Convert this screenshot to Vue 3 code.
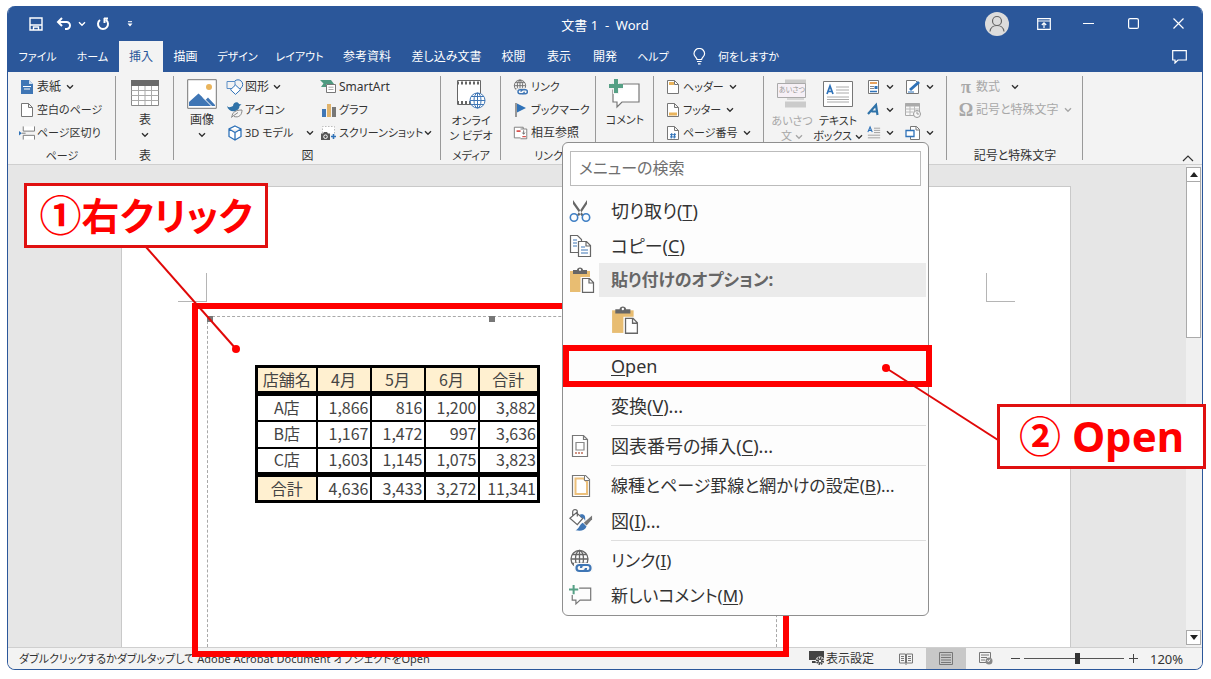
<script setup>
import { ref } from 'vue'

const zoom = ref(54)
const query = ref('')

const tabs = [
  'ファイル', 'ホーム', '挿入', '描画', 'デザイン', 'レイアウト',
  '参考資料', '差し込み文書', '校閲', '表示', '開発', 'ヘルプ',
]
const isKatakana = (text) => /^[ァ-ヶー]+$/.test(text)

const sales = [
  { name: 'A店', values: ['1,866', '816', '1,200', '3,882'] },
  { name: 'B店', values: ['1,167', '1,472', '997', '3,636'] },
  { name: 'C店', values: ['1,603', '1,145', '1,075', '3,823'] },
]
const totals = ['4,636', '3,433', '3,272', '11,341']

const menuTop = [
  { icon: 'cut', label: '切り取り', key: 'T' },
  { icon: 'copy', label: 'コピー', key: 'C' },
]
const menuRest = [
  { label: '変換', key: 'V', more: true, line: true },
  { icon: 'caption', label: '図表番号の挿入', key: 'C', more: true, line: true },
  { icon: 'borders', label: '線種とページ罫線と網かけの設定', key: 'B', more: true, long: true },
  { icon: 'bucket', label: '図', key: 'I', more: true, line: true },
  { icon: 'link', label: 'リンク', key: 'I', long: true },
  { icon: 'newcomment', label: '新しいコメント', key: 'M', long: true },
]
</script>

<template>
  <div class="stage">
    <svg class="sprite" width="0" height="0" aria-hidden="true">
      <symbol id="chev" viewBox="0 0 8 6"><path d="M1 1.200 4 4.200 7 1.200" fill="none" stroke="currentColor" stroke-width="1.400" /></symbol>
      <symbol id="cover" viewBox="0 0 16 16"><path d="M2 1h8l4 4v10H2z" fill="#3f76b5" /><path d="M10 1v4h4z" fill="#cfe0f2" /><path d="M4 7.500h8M5 10h6" stroke="#fff" stroke-width="1.200" /></symbol>
      <symbol id="blank" viewBox="0 0 16 16"><path d="M2.500 1.500h7l4 4v9h-11zM9.500 1.500v4h4" fill="#fff" stroke="#777" /></symbol>
      <symbol id="break" viewBox="0 0 17 16"><path d="M4.500 1v5h12V1M4.500 15V10.500h12V15" fill="#fff" stroke="#777" /><path d="M3 8.200h4" stroke="#777" /><path d="M0 6l3 2.300L0 10.600z" fill="#2f72b8" /></symbol>
      <symbol id="table" viewBox="0 0 28 26"><path d="M.5.5h27v25H.5z" fill="#fff" stroke="#888" /><path d="M0 0h28v6H0z" fill="#6a6a6a" /><path d="M.5 10.500h27M.5 15.500h27M.5 20.500h27M7.500 6v19M14 6v19M20.500 6v19" stroke="#aaa" /></symbol>
      <symbol id="picture" viewBox="0 0 30 30"><path d="M.7.7h28.600v28.600H.7z" fill="#fff" stroke="#777" /><path d="M2 27v-4l9.500-8.500 7 6.500 2.500-2.500 7 7.500v1z" fill="#3f76b5" /><path d="M16 18.500l9 9" stroke="#fff" /><circle cx="22" cy="8" r="3" fill="#e9b45c" /></symbol>
      <symbol id="shapes" viewBox="0 0 18 16"><circle cx="12" cy="5.500" r="4.700" fill="#f3f3f3" stroke="#2f72b8" /><path d="M1 2.500h8v7H1z" fill="#f3f3f3" stroke="#5b8ec6" /><path d="M9.500 6l5 4.700-5 4.700-5-4.700z" fill="#fff" stroke="#2f72b8" /></symbol>
      <symbol id="icons" viewBox="0 0 16 16"><path d="M0 4c2 2 4 1 6 0 0-4 5-5 6-2l2.500.5-2 1.500c0 3-2 4-4 5C4 10 1 8 0 4z" fill="#2f72a8" /><path d="M5 15c0-5 4-7 10-7 0 5-3 8-8 6.500M4 15.500l7-5" fill="#f3f3f3" stroke="#888" /></symbol>
      <symbol id="cube" viewBox="0 0 16 16"><path d="M8 1l6 3v7.500l-6 3.500-6-3.500V4zM2 4l6 3.500L14 4M8 7.500V15" fill="#fff" stroke="#2f72b8" stroke-width="1.300" /></symbol>
      <symbol id="smartart" viewBox="0 0 18 16"><path d="M0 1h11l3 4H6v3H1l2.500-3.500z" fill="#4f9a80" /><path d="M6.500 5.500h9v8h-9z" fill="#fff" stroke="#777" /><path d="M8.500 8.200h5M8.500 10.500h5" stroke="#aaa" /></symbol>
      <symbol id="chart" viewBox="0 0 16 16"><path d="M1 7h4v8H1z" fill="#3f76b5" /><path d="M6 2h4v13H6z" fill="#e0b36c" /><path d="M11 5h4v10h-4z" fill="#777" /></symbol>
      <symbol id="shot" viewBox="0 0 18 16"><path d="M2.500 8V1.500h12V9" fill="#fff" stroke="#bbb" stroke-dasharray="1.500 1.500" /><path d="M1 8.500h2l1-1.500h3l1 1.500h2V15H1z" fill="#555" /><circle cx="5.500" cy="11.700" r="1.800" fill="#555" stroke="#fff" /><path d="M13.500 9v5M11 11.500h5" stroke="#2f72b8" stroke-width="1.600" /></symbol>
      <symbol id="video" viewBox="0 0 30 30"><path d="M1.500 1.500h23v24h-23z" fill="#fff" stroke="#666" /><path d="M1 4h24M1 23.500h24" stroke="#666" stroke-width="3" stroke-dasharray="2 2" /><circle cx="21.500" cy="21.500" r="7.500" fill="#fff" stroke="#3f76b5" /><ellipse cx="21.500" cy="21.500" rx="3.500" ry="7.500" fill="none" stroke="#3f76b5" /><path d="M14 21.500h15M15 17.500h13M15 25.500h13M21.500 14v15" stroke="#3f76b5" /></symbol>
      <symbol id="link" viewBox="0 0 24 24"><g fill="none" stroke="#666" stroke-width="1.300"><circle cx="10.500" cy="10" r="8.500" /><ellipse cx="10.500" cy="10" rx="4" ry="8.500" /><path d="M2 10h17M3.500 5.500h14M3.500 14.500h14M10.500 1.500v17" /></g><path d="M5 14h19v9H5z" fill="#f9f9f9" /><g fill="none" stroke="#3f76b5" stroke-width="2.200"><path d="M14.500 16h-4a3 3 0 0 0 0 6h4a3 3 0 0 0 2.500-3" /><path d="M14.500 22h4a3 3 0 0 0 0-6h-4a3 3 0 0 0-2.500 3" /></g></symbol>
      <symbol id="flag" viewBox="0 0 16 16"><path d="M3 1v14" stroke="#666" stroke-width="1.300" /><path d="M4 1.500l9 4.500-9 4.500z" fill="#2f72b8" /></symbol>
      <symbol id="xref" viewBox="0 0 18 16"><path d="M1.500 1.500h10v12h-10z" fill="#fff" stroke="#777" /><path d="M4 6h5" stroke="#d9534f" stroke-width="2" /><path d="M8.500 3.500h7v11h-7" fill="#fff" stroke="#777" /><path d="M10.500 12h4" stroke="#d9534f" stroke-width="1.500" /><path d="M12 5v4M10.500 7.500l1.500 2 1.500-2" fill="none" stroke="#666" /></symbol>
      <symbol id="comment" viewBox="0 0 32 30"><path d="M4 5h26v18H13l-5 5v-5H4z" fill="#fff" stroke="#777" stroke-width="1.200" /><path d="M7 0v15M0 7.500h14" stroke="#f3f3f3" stroke-width="6" /><path d="M7 0v14M0 7h14" stroke="#56a085" stroke-width="4" /></symbol>
      <symbol id="header" viewBox="0 0 16 16"><path d="M2.500 1.500h7l4 4v9h-11z" fill="#fff" stroke="#777" /><path d="M4 3h5v3H4z" fill="#e9b45c" /><path d="M9.500 1.500v4h4" fill="none" stroke="#777" /></symbol>
      <symbol id="footer" viewBox="0 0 16 16"><path d="M2.500 1.500h7l4 4v9h-11zM9.500 1.500v4h4" fill="#fff" stroke="#777" /><path d="M4 10.500h8v3H4z" fill="#e9b45c" /></symbol>
      <symbol id="pageno" viewBox="0 0 16 16"><path d="M2.500 1.500h7l4 4v9h-11zM9.500 1.500v4h4" fill="#fff" stroke="#777" /><path d="M6.800 8l-.6 5.500M9.800 8l-.6 5.500M5 9.700h6M5 11.900h6" stroke="#2f72b8" /></symbol>
      <symbol id="greet" viewBox="0 0 30 30"><path d="M8 .5h21v7H8zM8 22.500h21v6H8z" fill="#cbcbcb" /><path d="M.5 4.500h28v14H.5z" fill="#f6f0f6" stroke="#aaa" /><path d="M10 20h17" stroke="#bbb" /></symbol>
      <symbol id="textbox" viewBox="0 0 30 26"><path d="M.5.5h29v25H.5z" fill="#fff" stroke="#777" /><path d="M4 13L7 5l3 8M5 10.500h4" fill="none" stroke="#2f72b8" stroke-width="1.700" /><path d="M13 6h13M13 9h13M13 12h13M4 16h22M4 18.500h22M4 21h22" stroke="#aaa" /></symbol>
      <symbol id="parts" viewBox="0 0 14 16"><path d="M1.500 1.500h10v13h-10z" fill="#fff" stroke="#777" /><path d="M3 4h7" stroke="#e9a35c" stroke-width="2" /><path d="M3 7.500h4M3 9.500h4" stroke="#888" /><path d="M7.500 8.500h3" stroke="#2f72b8" stroke-width="3" /><path d="M3 12.500h7" stroke="#2f72b8" stroke-width="1.500" /></symbol>
      <symbol id="wordart" viewBox="0 0 14 16"><path d="M1 12L9 3l1.500 10M4.500 9.500h6" fill="none" stroke="#2f72a8" stroke-width="2.200" /></symbol>
      <symbol id="dropcap" viewBox="0 0 16 16"><path d="M1 7l2.500-6L6 7M2 5h3" fill="none" stroke="#2f72b8" stroke-width="1.300" /><path d="M8 2.500h7M8 5h7M8 7.500h7M1 10.500h14M1 13.500h14" stroke="#999" /></symbol>
      <symbol id="sign" viewBox="0 0 16 16"><path d="M1.500 1.500h9l3 3v10h-12z" fill="#fff" stroke="#777" /><path d="M5 11l9-8" stroke="#2f72b8" stroke-width="3" /><path d="M3 13h6" stroke="#2f72b8" /></symbol>
      <symbol id="date" viewBox="0 0 16 16"><path d="M.5 1.500h14v12H.5z" fill="#f7f7f7" stroke="#aaa" /><path d="M0 3h15" stroke="#aaa" stroke-width="3" /><path d="M.5 7h14M.5 10h8M5 4v9M9.500 4v5" stroke="#bbb" /><circle cx="12" cy="12" r="3.500" fill="#f7f7f7" stroke="#999" /><path d="M12 9.500V12h2" fill="none" stroke="#999" /></symbol>
      <symbol id="object" viewBox="0 0 16 16"><path d="M5.500 1.500h6l3 3v10h-9z" fill="#fff" stroke="#777" /><path d="M11 1.500v3.500h3.500" fill="none" stroke="#777" /><path d="M1 5.500h8v6H1z" fill="#fff" stroke="#2f72b8" stroke-width="1.300" /></symbol>
      <symbol id="cut" viewBox="0 0 24 24"><path d="M4 1l10.500 15-2 1L4 5zM18 1L8 16l2 1 8-12z" fill="#666" /><g fill="none" stroke="#3f7fc4" stroke-width="1.600"><circle cx="5" cy="18.500" r="3.700" /><circle cx="17" cy="18.500" r="3.700" /></g></symbol>
      <symbol id="copy" viewBox="0 0 24 24"><path d="M1.500 1.500h7l4 4v13h-11z" fill="#fff" stroke="#666" stroke-width="1.200" /><path d="M4 6h4M4 9h4M4 12h4" stroke="#3f76b5" stroke-width="1.200" /><path d="M9.500 7.500h8l4 4v11h-12zM17 7.500v4.500h4.500" fill="#fff" stroke="#666" stroke-width="1.200" /><path d="M12 13h4M12 16h7M12 19h7" stroke="#3f76b5" stroke-width="1.200" /></symbol>
      <symbol id="paste" viewBox="0 0 26 26"><path d="M1 4h20v21H1z" fill="#e8bd72" /><path d="M4 3h4c0-3.500 6-3.500 6 0h4v4H4z" fill="#666" /><circle cx="11" cy="2.800" r="1.100" fill="#fff" /><path d="M11.500 10h13v16h-13z" fill="#fdfdfd" /><path d="M13.500 11.500h7l4 4v9.800h-11zM20 11.500V16h4.500" fill="#fff" stroke="#666" stroke-width="1.200" /></symbol>
      <symbol id="caption" viewBox="0 0 24 24"><path d="M3.500 1.500h11l4 4v17h-15zM14.500 1.500v4h4" fill="#fff" stroke="#777" stroke-width="1.200" /><path d="M7 8.500h8v7.500H7z" fill="#fff" stroke="#888" stroke-width="1.200" /><path d="M6 19h9" stroke="#c0705c" stroke-width="1.500" stroke-dasharray="2 1" /></symbol>
      <symbol id="borders" viewBox="0 0 24 24"><path d="M3.500 1.500h13l4 4v17h-17z" fill="#fff" stroke="#777" stroke-width="1.200" /><path d="M6.500 4.500h8l3.500 3.500v12H6.500z" fill="none" stroke="#ecc07c" stroke-width="2" /><path d="M15.500 1.500v5h5" fill="#fff" stroke="#777" /></symbol>
      <symbol id="bucket" viewBox="0 0 26 26"><path d="M1 10l7-6 7 6-6 7zM4 8V3c0-3 5-3 5 0v5" fill="#fff" stroke="#666" stroke-width="1.300" /><path d="M12 6c5-1 6 2 5.500 7-1-3-3-4-5-4z" fill="#3f76b5" /><path d="M25 7v4l-6 7-3-3z" fill="#777" /><path d="M15 15l4 4c-2 5-7 5-12 4 4-1 4-6 8-8z" fill="#3f76b5" /></symbol>
      <symbol id="newcomment" viewBox="0 0 26 24"><path d="M11 3.500h12.500v13H12l-4.500 4v-4H3.500V11" fill="none" stroke="#777" stroke-width="1.300" /><path d="M5 0v10M0 5h10" stroke="#56a085" stroke-width="2.200" /></symbol>
    </svg>

    <div class="window">
      <header class="titlebar">
        <div class="quick">
          <button aria-label="上書き保存"><svg width="14" height="14" viewBox="0 0 14 14"><path d="M1 1h12v12H1z" fill="none" stroke="#fff" stroke-width="1.400" /><path d="M1 8h12M4.500 13v-3h5v3" fill="none" stroke="#fff" stroke-width="1.400" /></svg></button>
          <button aria-label="元に戻す"><svg width="16" height="14" viewBox="0 0 16 14"><path d="M6 1L2 5l4 4M2 5h8.500a3.500 3.500 0 0 1 0 7H9" fill="none" stroke="#fff" stroke-width="2" /></svg></button>
          <button class="narrow" aria-label="元に戻す履歴"><svg width="8" height="6"><use href="#chev" /></svg></button>
          <button class="redo" aria-label="繰り返し"><svg width="14" height="14" viewBox="0 0 14 14"><path d="M4 3a5 5 0 1 0 6 0M8 1.500h4M8.500 1v5" fill="none" stroke="#fff" stroke-width="2" /></svg></button>
          <button class="narrow custom" aria-label="カスタマイズ"><svg width="6" height="6" viewBox="0 0 6 6"><path d="M1 .7h4" stroke="#fff" /><path d="M.5 2.500h5L3 5.500z" fill="#fff" /></svg></button>
        </div>
        <h1>文書 1&nbsp; -&nbsp; Word</h1>
        <div class="controls">
          <button class="user" aria-label="アカウント"><svg width="24" height="24" viewBox="0 0 24 24"><circle cx="12" cy="12" r="12" fill="#dcdcdc" /><circle cx="12" cy="9" r="4.500" fill="none" stroke="#666" stroke-width="1.200" /><path d="M5 19.500c1-8 13-8 14 0" fill="none" stroke="#666" stroke-width="1.200" /></svg></button>
          <button aria-label="リボンの表示オプション"><svg width="14" height="12" viewBox="0 0 14 12"><path d="M.7.7h12.600v10.600H.7zM.7 3h12.600M7 10V4.800M4.800 7L7 4.800 9.200 7" fill="none" stroke="#fff" stroke-width="1.200" /></svg></button>
          <button aria-label="最小化"><svg width="11" height="11" viewBox="0 0 11 11"><path d="M0 5.500h11" stroke="#fff" /></svg></button>
          <button aria-label="最大化"><svg width="11" height="11" viewBox="0 0 11 11"><rect x=".6" y=".6" width="9.800" height="9.800" rx="1.500" fill="none" stroke="#fff" stroke-width="1.200" /></svg></button>
          <button aria-label="閉じる"><svg width="11" height="11" viewBox="0 0 11 11"><path d="M.5.5l10 10M10.500.5l-10 10" stroke="#fff" stroke-width="1.200" /></svg></button>
        </div>
      </header>

      <nav class="tabs">
        <div class="tablist">
          <button v-for="t in tabs" :key="t" :class="{ active: t === '挿入', k: isKatakana(t) }">{{ t }}</button>
        </div>
        <button class="tell k"><svg width="13" height="17" viewBox="0 0 13 17"><path d="M4 11.500C4 9.500 1 8.500 1 5.700a5.300 5.300 0 0 1 10.600 0c0 2.800-3 3.800-3 5.800zM4 13.500h4.600M5 15.800h2.600" fill="none" stroke="#fff" stroke-width="1.200" /></svg>何をしますか</button>
        <button class="share" aria-label="コメント"><svg width="15" height="14" viewBox="0 0 15 14"><path d="M.7.7h13.600v9.300H6l-3 3v-3H.7z" fill="none" stroke="#fff" stroke-width="1.200" /></svg></button>
      </nav>

      <section class="ribbon">
        <div class="group g-page">
          <div class="rows">
            <button><svg width="16" height="16"><use href="#cover" /></svg>表紙<svg class="c" width="8" height="6"><use href="#chev" /></svg></button>
            <button class="k"><svg width="16" height="16"><use href="#blank" /></svg>空白のページ</button>
            <button class="k"><svg width="16" height="16"><use href="#break" /></svg>ページ区切り</button>
          </div>
          <p class="k">ページ</p>
        </div>
        <div class="group g-table">
          <button class="big"><svg width="28" height="26"><use href="#table" /></svg><span>表</span><svg width="8" height="6"><use href="#chev" /></svg></button>
          <p>表</p>
        </div>
        <div class="group g-fig">
          <div class="cols">
            <button class="big"><svg width="30" height="30"><use href="#picture" /></svg><span>画像</span><svg width="8" height="6"><use href="#chev" /></svg></button>
            <div class="rows">
              <button><svg width="18" height="16"><use href="#shapes" /></svg>図形<svg class="c" width="8" height="6"><use href="#chev" /></svg></button>
              <button class="k"><svg width="18" height="16"><use href="#icons" /></svg>アイコン</button>
              <button class="k"><svg width="18" height="16"><use href="#cube" /></svg>3D モデル<svg class="c far" width="8" height="6"><use href="#chev" /></svg></button>
            </div>
            <div class="rows second">
              <button><svg width="18" height="16"><use href="#smartart" /></svg>SmartArt</button>
              <button class="k"><svg width="18" height="16"><use href="#chart" /></svg>グラフ</button>
              <button class="k"><svg width="18" height="16"><use href="#shot" /></svg>スクリーンショット<svg width="8" height="6"><use href="#chev" /></svg></button>
            </div>
          </div>
          <p>図</p>
        </div>
        <div class="group g-media">
          <button class="big two"><svg width="30" height="30"><use href="#video" /></svg><span>オンライ<br>ン ビデオ</span></button>
          <p class="k">メディア</p>
        </div>
        <div class="group g-link">
          <div class="rows">
            <button class="k"><svg width="16" height="16"><use href="#link" /></svg>リンク</button>
            <button class="k"><svg width="16" height="16"><use href="#flag" /></svg>ブックマーク</button>
            <button><svg width="16" height="16"><use href="#xref" /></svg>相互参照</button>
          </div>
          <p class="k">リンク</p>
        </div>
        <div class="group g-comment">
          <button class="big k"><svg width="32" height="30"><use href="#comment" /></svg><span>コメント</span></button>
        </div>
        <div class="group g-header">
          <div class="rows">
            <button class="k"><svg width="16" height="16"><use href="#header" /></svg>ヘッダー<svg class="c" width="8" height="6"><use href="#chev" /></svg></button>
            <button class="k"><svg width="16" height="16"><use href="#footer" /></svg>フッター<svg class="c" width="8" height="6"><use href="#chev" /></svg></button>
            <button class="k"><svg width="16" height="16"><use href="#pageno" /></svg>ページ番号<svg class="c" width="8" height="6"><use href="#chev" /></svg></button>
          </div>
        </div>
        <div class="group g-text">
          <div class="cols">
            <button class="big two off"><i class="greet"><svg width="30" height="30"><use href="#greet" /></svg><b>あいさつ</b></i><span>あいさつ<br>文 <svg width="8" height="6"><use href="#chev" /></svg></span></button>
            <button class="big two"><svg width="30" height="26"><use href="#textbox" /></svg><span>テキスト<br>ボックス <svg width="8" height="6"><use href="#chev" /></svg></span></button>
            <div class="rows mini">
              <button aria-label="クイック パーツ"><svg width="14" height="16"><use href="#parts" /></svg><svg class="c" width="8" height="6"><use href="#chev" /></svg></button>
              <button aria-label="ワードアート"><svg width="14" height="16"><use href="#wordart" /></svg><svg class="c" width="8" height="6"><use href="#chev" /></svg></button>
              <button aria-label="ドロップ キャップ"><svg width="14" height="16"><use href="#dropcap" /></svg><svg class="c" width="8" height="6"><use href="#chev" /></svg></button>
            </div>
            <div class="rows mini">
              <button aria-label="署名欄"><svg width="16" height="16"><use href="#sign" /></svg><svg class="c" width="8" height="6"><use href="#chev" /></svg></button>
              <button aria-label="日付と時刻"><svg width="16" height="16"><use href="#date" /></svg></button>
              <button aria-label="オブジェクト"><svg width="16" height="16"><use href="#object" /></svg><svg class="c" width="8" height="6"><use href="#chev" /></svg></button>
            </div>
          </div>
        </div>
        <div class="group g-sym">
          <div class="rows">
            <button class="off"><em>π</em>数式<svg class="c dark" width="8" height="6"><use href="#chev" /></svg></button>
            <button class="off"><em>Ω</em>記号と特殊文字<svg class="c" width="8" height="6"><use href="#chev" /></svg></button>
          </div>
          <p>記号と特殊文字</p>
        </div>
        <button class="fold" aria-label="リボンを折りたたむ"><svg width="12" height="7" viewBox="0 0 12 7"><path d="M1 6l5-5 5 5" fill="none" stroke="#333" stroke-width="1.200" /></svg></button>
      </section>

      <main class="canvas">
        <div class="paper">
          <div class="corner left"></div>
          <div class="corner right"></div>
          <div class="embed">
            <span class="handle h1"></span><span class="handle h2"></span>
            <table>
              <thead><tr><th>店舗名</th><th>4月</th><th>5月</th><th>6月</th><th>合計</th></tr></thead>
              <tbody>
                <tr v-for="r in sales" :key="r.name"><th>{{ r.name }}</th><td v-for="v in r.values" :key="v">{{ v }}</td></tr>
              </tbody>
              <tfoot><tr><th>合計</th><td v-for="v in totals" :key="v">{{ v }}</td></tr></tfoot>
            </table>
          </div>
        </div>
        <div class="scroll">
          <button aria-label="上へ"><svg width="8" height="5"><path d="M4 0l4 5H0z" fill="#222" /></svg></button>
          <div class="thumb"></div>
          <button class="down" aria-label="下へ"><svg width="8" height="5"><path d="M4 5l4-5H0z" fill="#222" /></svg></button>
        </div>
      </main>

      <footer class="status">
        <span class="hint k">ダブルクリックするかダブルタップして Adobe Acrobat Document オブジェクトをOpen</span>
        <button class="disp"><svg width="16" height="15" viewBox="0 0 16 15"><path d="M0 0h15v9H0zM3 10h5v2H3z" fill="#444" /><circle cx="11" cy="10" r="4.500" fill="#f3f3f3" /><circle cx="11" cy="10" r="3" fill="none" stroke="#444" stroke-width="2" stroke-dasharray="1.500 .8" /><circle cx="11" cy="10" r="1.800" fill="none" stroke="#444" /></svg>表示設定</button>
        <button class="view" aria-label="閲覧モード"><svg width="14" height="12" viewBox="0 0 14 12"><path d="M.5 1h6v9h-6zM7.500 1h6v9h-6zM7 1v11M2 3.500h3M2 5.500h3M2 7.500h3M9 3.500h3M9 5.500h3M9 7.500h3" fill="none" stroke="#777" /></svg></button>
        <button class="view on" aria-label="印刷レイアウト"><svg width="14" height="13" viewBox="0 0 14 13"><path d="M.5.5h13v12H.5zM2 3h10M2 5.500h10M2 8h10M2 10.500h10" fill="none" stroke="#777" /></svg></button>
        <button class="view" aria-label="Web レイアウト"><svg width="14" height="13" viewBox="0 0 14 13"><path d="M.5.500h11v10H.5zM2 3h8M2 5.500h6M2 8h4" fill="none" stroke="#777" /><circle cx="10" cy="9" r="3.500" fill="#888" /><path d="M8 8.500l2 1 1-2" fill="none" stroke="#eee" /></svg></button>
        <button class="step" aria-label="縮小"><svg width="9" height="9"><path d="M0 4.500h9" stroke="#444" /></svg></button>
        <input v-model="zoom" class="slider" type="range" min="0" max="100" aria-label="ズーム">
        <button class="step" aria-label="拡大"><svg width="9" height="9"><path d="M0 4.500h9M4.500 0v9" stroke="#444" /></svg></button>
        <span class="pct">120%</span>
      </footer>
    </div>

    <div class="frame object-frame"></div>

    <div class="menu" role="menu">
      <input v-model="query" type="text" placeholder="メニューの検索" aria-label="メニューの検索">
      <button v-for="m in menuTop" :key="m.label" class="item"><svg width="24" height="24"><use :href="'#' + m.icon" /></svg><span>{{ m.label }}(<u>{{ m.key }}</u>)</span></button>
      <div class="heading"><svg width="26" height="26"><use href="#paste" /></svg><strong>貼り付けのオプション:</strong></div>
      <div class="pastes"><button aria-label="貼り付け"><svg width="28" height="28"><use href="#paste" /></svg></button></div>
      <hr>
      <button class="item"><i></i><span><u>O</u>pen</span></button>
      <hr>
      <template v-for="m in menuRest" :key="m.label">
        <button class="item" :class="{ long: m.long }"><svg v-if="m.icon" width="24" height="24"><use :href="'#' + m.icon" /></svg><i v-else></i><span>{{ m.label }}(<u>{{ m.key }}</u>){{ m.more ? '...' : '' }}</span></button>
        <hr v-if="m.line">
      </template>
    </div>

    <div class="frame open-frame"></div>
    <svg class="leaders" aria-hidden="true">
      <g stroke="#e00808" stroke-width="2"><path d="M146 247L236 349" /><path d="M886 368L998 440" /></g>
      <circle cx="236" cy="349" r="4" fill="#f00" /><circle cx="886" cy="368" r="4" fill="#f00" />
    </svg>
    <div class="callout first"><span>①</span>右クリック</div>
    <div class="callout second">② Open</div>
  </div>
</template>

<style>
body { background: #fff; }
</style>

<style scoped>
* { box-sizing: border-box; }
.stage {
  position: relative;
  display: flex;
  min-height: 100vh;
  padding: 6px 8px 9px 7px;
  font-family: "Noto Sans", "Noto Sans CJK JP", sans-serif;
  font-size: 12px;
  line-height: 16px;
  color: #333;
  font-feature-settings: "palt";
}
.sprite { position: absolute; }
button {
  display: flex;
  align-items: center;
  margin: 0;
  padding: 0;
  border: 0;
  background: none;
  font: inherit;
  font-feature-settings: inherit;
  color: inherit;
  white-space: nowrap;
}
svg { flex: none; }
p, h1 { margin: 0; font-weight: 400; }
.k { font-size: 11px; }

.window {
  display: flex;
  flex-direction: column;
  flex: 1;
  min-width: 0;
  overflow: hidden;
  border: 1px solid #2b579a;
  border-top: 0;
  border-radius: 8px;
  background: #f3f3f3;
}
.titlebar {
  display: grid;
  grid-template-columns: 1fr auto 1fr;
  align-items: center;
  height: 35px;
  background: #2b579a;
  color: #fff;
}
.titlebar h1 { font-size: 13px; line-height: 18px; padding-top: 2px; }
.quick { display: flex; padding-left: 14px; }
.quick button { width: 28px; height: 32px; justify-content: center; }
.quick .redo { width: 34px; }
.quick .narrow { width: 8px; }
.quick .custom { margin-left: 6px; }
.controls { display: flex; justify-content: flex-end; padding-right: 1px; }
.controls button { width: 45px; height: 32px; justify-content: center; }
.controls .user { margin-right: 2px; }

.tabs { display: flex; height: 31px; background: #2b579a; color: #fff; }
.tablist {
  display: grid;
  grid-template-columns: 57px 53px 44px 45px 59px 65px 70px 89px 45px 46px 46px 50px;
  padding-left: 1px;
}
.tablist button { justify-content: center; padding-top: 1px; }
.tablist .active { background: #f3f3f3; color: #2b579a; }
.tell { margin-left: 15px; gap: 12px; }
.share { margin-left: auto; padding-right: 15px; }

.ribbon {
  display: flex;
  height: 93px;
  padding-top: 3px;
  border-bottom: 1px solid #cfcfcf;
  background: #f3f3f3;
}
.group {
  position: relative;
  display: flex;
  flex-direction: column;
  align-items: center;
  flex: none;
}
.group::after {
  content: "";
  position: absolute;
  top: 1px;
  right: 0;
  bottom: 4px;
  width: 1px;
  background: #999;
}
.group p { margin-top: auto; }
.g-page { width: 108px; }
.g-table { width: 58px; }
.g-fig { width: 267px; }
.g-media { width: 60px; }
.g-link { width: 95px; }
.g-comment { width: 58px; }
.g-header { width: 110px; }
.g-text { width: 183px; }
.g-sym { width: 136px; }
.rows { display: grid; grid-auto-rows: 23px; align-self: stretch; justify-content: start; }
.rows button { gap: 2px; }
.c { margin-left: 3px; }
.g-page .rows { padding-left: 11px; }
.cols { display: flex; align-self: stretch; }
.big { flex-direction: column; width: 56px; height: 69px; padding-top: 4px; text-align: center; }
.big span { margin-top: auto; margin-bottom: 1px; }
.big:not(.two) span { height: 16px; margin: 3px 0 4px; }
.big svg:first-child { height: 30px; }
.g-table .big svg:first-child { height: 28px; margin-bottom: 2px; }
.g-fig .rows { width: 94px; flex: none; margin-left: -4px; }
.g-fig .rows.second { margin-left: 0; width: 118px; }
.g-fig .rows button { gap: 1px; }
.c.far { margin-left: 12px; }
.two span { font-size: 11px; line-height: 15px; }
.g-link .rows { padding-left: 12px; }
.g-header .rows { padding-left: 11px; }
.off { color: #a8a8a8; }
.greet { position: relative; display: block; height: 30px; font-style: normal; }
.greet b { position: absolute; left: 0; top: 4px; width: 30px; font-size: 7px; line-height: 14px; color: #999; font-weight: 400; }
.g-text .cols { padding-left: 5px; }
.g-text .big { width: 46px; }
.mini { width: 38px; }
.g-text .mini:nth-of-type(1) { margin-left: 6px; }
.g-sym .rows { padding-left: 11px; }
.g-sym em { width: 16px; font: bold 18px/20px "Liberation Serif", serif; text-align: center; }
.c.dark { color: #333; margin-left: 9px; }
.fold { align-self: flex-end; margin: 0 8px 2px auto; }

.canvas { display: flex; flex: 1; background: #e6e6e6; }
.paper {
  position: relative;
  flex: 1;
  margin: 21px 115px 0 113px;
  border: 1px solid #c9c9c9;
  border-bottom: 0;
  background: #fff;
}
.corner { position: absolute; top: 86px; width: 29px; height: 29px; border-bottom: 1px solid #b5b5b5; }
.corner.left { left: 56px; border-right: 1px solid #b5b5b5; }
.corner.right { right: 55px; border-left: 1px solid #b5b5b5; }
.embed {
  position: absolute;
  top: 129px;
  left: 85px;
  right: 293px;
  bottom: 0;
  padding: 48px 0 0 47px;
  border: 1px dashed #a9a9a9;
  border-bottom: 0;
}
.handle { position: absolute; top: -1px; width: 6px; height: 6px; background: #777; }
.h1 { left: -1px; }
.h2 { left: calc(50% - 3px); }
table {
  border-collapse: collapse;
  table-layout: fixed;
  width: 284px;
  border: 3px solid #000;
  font: 16px/20px "Noto Sans CJK JP", sans-serif;
  font-feature-settings: normal;
  color: #444;
}
th, td { width: 54px; height: 27px; padding: 0 1px 2px; border: 2px solid #000; background: #fff; text-align: right; font-weight: 400; white-space: nowrap; }
th { text-align: center; }
th:first-child, th:last-child { width: 60px; }
thead th, tfoot th { background: #fff0d0; }
thead th { border-bottom: 5px solid #000; }
tfoot th, tfoot td { border-top: 5px solid #000; }

.scroll { display: flex; flex-direction: column; width: 16px; padding: 2px 1px 2px 0; background: #f0f0f0; }
.scroll button { height: 15px; justify-content: center; border: 1px solid #aaa; background: #fff; }
.thumb { height: 156px; border: 1px solid #aaa; border-top: 0; background: #fff; }
.scroll .down { margin-top: auto; }

.status { display: flex; align-items: center; height: 22px; border-top: 1px solid #cfcfcf; background: #f3f3f3; }
.hint { padding-left: 11px; white-space: nowrap; }
.disp { margin-left: auto; padding-right: 12px; gap: 1px; }
.view { width: 40px; height: 21px; justify-content: center; }
.view.on { background: #c8c8c8; }
.step { width: 18px; justify-content: center; }
.slider { appearance: none; width: 100px; height: 14px; margin: 0; background: linear-gradient(#555, #555) center / 100% 1px no-repeat; }
.slider::-webkit-slider-thumb { appearance: none; width: 5px; height: 11px; background: #333; }
.pct { width: 60px; padding-left: 8px; font-size: 13px; }

.frame { position: absolute; border: 6px solid #f00; }
.object-frame { left: 192px; top: 303px; width: 597px; height: 354px; }
.open-frame { left: 563px; top: 345px; width: 369px; height: 42px; }

.menu {
  position: absolute;
  left: 562px;
  top: 142px;
  width: 367px;
  padding: 8px 2px 2px 0;
  border: 1px solid #8f8f8f;
  border-radius: 6px;
  background: #fdfdfd;
  font-size: 18px;
  line-height: 24px;
}
.menu input {
  display: block;
  width: 351px;
  height: 35px;
  margin: 0 0 7px 7px;
  padding: 0 8px 2px;
  border: 1px solid #bbb;
  outline: 0;
  background: #fff;
  font: inherit;
  font-size: 16px;
  font-feature-settings: inherit;
}
.menu input::placeholder { color: #707070; opacity: 1; }
.item { width: 100%; height: 35px; padding-left: 6px; gap: 18px; }
.item.long { font-size: 17px; }
.item i { width: 24px; }
.item u { text-underline-offset: 2px; text-decoration-thickness: 1px; }
.heading { display: flex; align-items: center; gap: 4px; height: 34px; padding-left: 6px; color: #666; }
.heading strong { flex: 1; padding-left: 12px; font-size: 17px; line-height: 34px; background: #ebebeb; }
.pastes { display: flex; height: 46px; padding-left: 48px; }
.menu hr { height: 1px; margin: 2px 0 2px 48px; border: 0; background: #dedede; }

.leaders { position: absolute; left: 0; top: 0; width: 100%; height: 100%; pointer-events: none; }
.callout {
  position: absolute;
  display: flex;
  align-items: center;
  justify-content: center;
  height: 65px;
  padding-bottom: 2px;
  border: 3px solid #e01010;
  background: #fff;
  color: #f00;
  font-size: 42px;
  line-height: 56px;
  font-weight: 700;
  white-space: nowrap;
}
.first { left: 24px; top: 183px; width: 244px; font-size: 38px; }
.first span { font-size: 42px; }
.second { left: 997px; top: 404px; width: 209px; }
</style>
